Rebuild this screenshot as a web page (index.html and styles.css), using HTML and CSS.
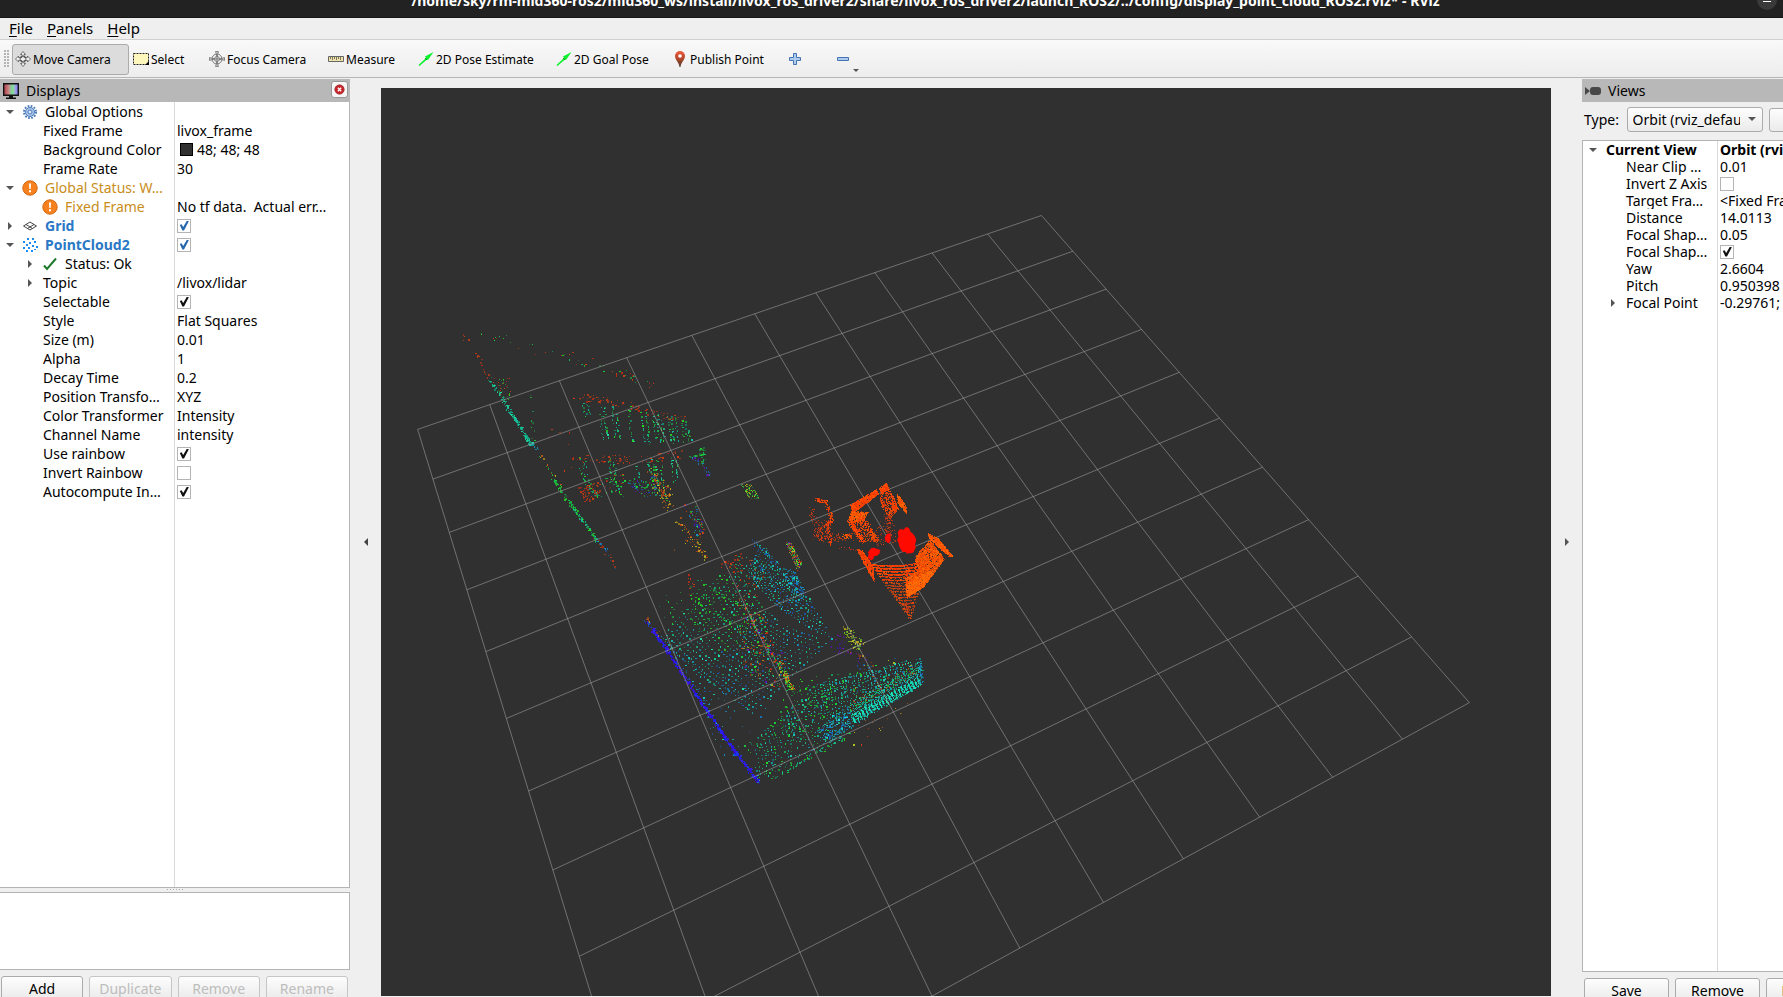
FILE: index.html
```
<!DOCTYPE html>
<html lang="en">
<head>
<meta charset="utf-8">
<title>display_point_cloud_ROS2.rviz* - RViz</title>
<link rel="stylesheet" href="styles.css">
</head>
<body>
<header class="titlebar">
  <span class="titlebar-text">/home/sky/rm-mid360-ros2/mid360_ws/install/livox_ros_driver2/share/livox_ros_driver2/launch_ROS2/../config/display_point_cloud_ROS2.rviz* - RViz</span>
  <button class="minimize" aria-label="Minimize"></button>
</header>
<nav class="menubar">
  <button class="menu"><u>F</u>ile</button>
  <button class="menu"><u>P</u>anels</button>
  <button class="menu"><u>H</u>elp</button>
</nav>
<div class="toolbar">
  <span class="grip"></span>
  <button class="tool tool-move active"><svg class="icon" viewBox="0 0 16 16"><path d="M8 .5l2.500 3H9v3h3.500V5L15.500 8l-3 3V9.500H9v3h1.500L8 15.500l-2.500-3H7v-3H3.500V11L.5 8l3-3v1.500H7v-3H5.500z" fill="#eee" stroke="#555" stroke-width=".8"/><circle cx="8" cy="8" r="3" fill="none" stroke="#555"/></svg>Move Camera</button>
  <button class="tool tool-select"><svg class="icon" viewBox="0 0 16 16"><path d="M.5 2.500h15v11H.5z" fill="#fdf6bd" stroke="#222" stroke-dasharray="2 1"/><path d="M16 10v4h-4z"/></svg>Select</button>
  <button class="tool tool-focus"><svg class="icon" viewBox="0 0 16 16"><g fill="none" stroke="#777"><circle cx="8" cy="8" r="5"/><circle cx="8" cy="8" r="2.500"/><path d="M8 3v10M3 8h10"/></g><path d="M8 5L6.500.5h3zM8 11l-1.500 4.500h3zM5 8L.5 6.500v3zM11 8l4.500-1.500v3z" fill="#ccc" stroke="#666" stroke-width=".7"/></svg>Focus Camera</button>
  <button class="tool tool-measure"><svg class="icon" viewBox="0 0 16 16"><path d="M.5 5.500h15v5H.5z" fill="#f1e3aa" stroke="#666"/><path d="M2.500 6v2M4.500 6v3M6.500 6v2M8.500 6v3M10.500 6v2M12.500 6v3" stroke="#776"/></svg>Measure</button>
  <button class="tool tool-pose"><svg class="icon" viewBox="0 0 16 16"><path d="M.5 14L8 7l-1-1.500L15.500 1 10 9 9 8.500 1.500 15z" fill="#0bf22c"/><path d="M7 7l2 2" stroke="#168c22"/></svg>2D Pose Estimate</button>
  <button class="tool tool-goal"><svg class="icon" viewBox="0 0 16 16"><path d="M.5 14L8 7l-1-1.500L15.500 1 10 9 9 8.500 1.500 15z" fill="#0bf22c"/><path d="M7 7l2 2" stroke="#168c22"/></svg>2D Goal Pose</button>
  <button class="tool tool-publish"><svg class="icon" viewBox="0 0 16 16"><defs><linearGradient id="pin" x2="0" y2="1"><stop stop-color="#f0593b"/><stop offset=".45" stop-color="#b94a2c"/><stop offset="1" stop-color="#4a3824"/></linearGradient></defs><path d="M8 0a5 5 0 0 1 5 5c0 4-4 6-4.500 11h-1C7 11 3 9 3 5a5 5 0 0 1 5-5z" fill="url(#pin)"/><circle cx="8" cy="5" r="1.800" fill="#fff"/></svg>Publish Point</button>
  <button class="tool tool-plus" aria-label="Add tool"><svg class="icon" viewBox="0 0 16 16"><path d="M6.500 2.500h3v4h4v3h-4v4h-3v-4h-4v-3h4z" fill="#aecbee" stroke="#4474b5"/></svg></button>
  <button class="tool tool-minus" aria-label="Remove tool"><svg class="icon" viewBox="0 0 16 16"><path d="M2.500 6.500h11v3h-11z" fill="#aecbee" stroke="#4474b5"/></svg><i class="tri drop"></i></button>
</div>
<main class="workspace">
  <section class="dock displays">
    <div class="dock-head">
      <svg class="icon" viewBox="0 0 16 16"><defs><linearGradient id="rgb"><stop offset=".1" stop-color="#b54f58"/><stop offset=".35" stop-color="#c88"/><stop offset=".5" stop-color="#8c9"/><stop offset=".65" stop-color="#8d9"/><stop offset=".8" stop-color="#a0a0e8"/><stop offset="1" stop-color="#77e"/></linearGradient></defs><path d="M.7.700h14.600v11.600H.7z" fill="url(#rgb)" stroke="#111" stroke-width="1.400"/><path d="M6 13h4v1.500h3V16H3v-1.500h3z" fill="#111"/></svg>
      <span class="dock-title">Displays</span>
      <button class="close" aria-label="Close Displays"><svg viewBox="0 0 12 12"><circle cx="6" cy="6" r="5" fill="#c9242c" stroke="#a01c22"/><path d="M4.200 4.200l3.600 3.600M7.800 4.200L4.200 7.800" stroke="#fff" stroke-width="1.500"/></svg></button>
    </div>
    <div class="tree tree-left">
      <table>
        <colgroup><col class="name-col"><col></colgroup>
        <tr><th class="l1"><div><i class="tri open"></i><svg class="icon" viewBox="0 0 16 16"><circle cx="8" cy="8" r="6" fill="none" stroke="#4b7bb8" stroke-width="2" stroke-dasharray="1.700 1.440"/><circle cx="8" cy="8" r="4.500" fill="#a9c6ea" stroke="#4b7bb8"/><circle cx="8" cy="8" r="2" fill="#dce9f8" stroke="#4b7bb8"/></svg>Global Options</div></th><td></td></tr>
        <tr><th class="prop">Fixed Frame</th><td>livox_frame</td></tr>
        <tr><th class="prop">Background Color</th><td><span class="swatch"></span>48; 48; 48</td></tr>
        <tr><th class="prop">Frame Rate</th><td>30</td></tr>
        <tr class="warn"><th class="l1"><div><i class="tri open"></i><svg class="icon" viewBox="0 0 16 16"><circle cx="8" cy="8" r="7.200" fill="#f5821f" stroke="#d4660e"/><path d="M7 3.500h2L8.700 9H7.300zM7 10.300h2v2H7z" fill="#fff"/></svg>Global Status: W…</div></th><td></td></tr>
        <tr class="warn"><th class="l2"><div><i class="tri none"></i><svg class="icon" viewBox="0 0 16 16"><circle cx="8" cy="8" r="7.200" fill="#f5821f" stroke="#d4660e"/><path d="M7 3.500h2L8.700 9H7.300zM7 10.300h2v2H7z" fill="#fff"/></svg>Fixed Frame</div></th><td class="plain">No tf data.&nbsp; Actual err…</td></tr>
        <tr class="disp"><th class="l1"><div><i class="tri shut"></i><svg class="icon" viewBox="0 0 16 16"><path d="M1.500 8L8 4l6.500 4L8 12zM4 6.500l6.500 4M12 6.500l-6.500 4" fill="none" stroke="#444"/></svg><label for="c-grid">Grid</label></div></th><td><input type="checkbox" class="check blue" id="c-grid" checked></td></tr>
        <tr class="disp"><th class="l1"><div><i class="tri open"></i><svg class="icon" viewBox="0 0 16 16"><path d="M5 1h2v2H5zM10 1h2v2h-2zM1 4h2v2H1zM7 5h2v2H7zM12 4h2v2h-2zM4 7h2v2H4zM10 8h2v2h-2zM1 10h2v2H1zM6 10h2v2H6zM14 9h2v2h-2zM4 13h2v2H4zM9 13h2v2H9zM12 12h2v1h-2z" fill="#1b8cf0"/></svg><label for="c-pc">PointCloud2</label></div></th><td><input type="checkbox" class="check blue" id="c-pc" checked></td></tr>
        <tr><th class="l2"><div><i class="tri shut"></i><svg class="icon" viewBox="0 0 16 16"><path d="M2 9.500l3 3.500L14 2.500" fill="none" stroke="#1e7a2a" stroke-width="2"/></svg>Status: Ok</div></th><td></td></tr>
        <tr><th class="sub"><div><i class="tri shut"></i>Topic</div></th><td>/livox/lidar</td></tr>
        <tr><th class="prop"><label for="c-sel">Selectable</label></th><td><input type="checkbox" class="check" id="c-sel" checked></td></tr>
        <tr><th class="prop">Style</th><td>Flat Squares</td></tr>
        <tr><th class="prop">Size (m)</th><td>0.01</td></tr>
        <tr><th class="prop">Alpha</th><td>1</td></tr>
        <tr><th class="prop">Decay Time</th><td>0.2</td></tr>
        <tr><th class="prop">Position Transfo…</th><td>XYZ</td></tr>
        <tr><th class="prop">Color Transformer</th><td>Intensity</td></tr>
        <tr><th class="prop">Channel Name</th><td>intensity</td></tr>
        <tr><th class="prop"><label for="c-use">Use rainbow</label></th><td><input type="checkbox" class="check" id="c-use" checked></td></tr>
        <tr><th class="prop"><label for="c-inv">Invert Rainbow</label></th><td><input type="checkbox" class="check" id="c-inv"></td></tr>
        <tr><th class="prop"><label for="c-auto">Autocompute In…</label></th><td><input type="checkbox" class="check" id="c-auto" checked></td></tr>
      </table>
    </div>
    <div class="splitter"></div>
    <div class="help"></div>
    <div class="buttons">
      <button class="btn">Add</button>
      <button class="btn" disabled>Duplicate</button>
      <button class="btn" disabled>Remove</button>
      <button class="btn" disabled>Rename</button>
    </div>
  </section>
  <button class="collapse" aria-label="Collapse left panel"><i class="tri left"></i></button>
  <div class="view"><canvas class="scene" role="img" aria-label="Point cloud over a ten by ten grid"></canvas></div>
  <button class="collapse" aria-label="Collapse right panel"><i class="tri shut"></i></button>
  <section class="dock views">
    <div class="views-inner">
      <div class="dock-head">
        <svg class="icon" viewBox="0 0 16 16"><rect x="5" y="4" width="11" height="8" rx="3" fill="#484848"/><path d="M0 4l5 4-5 4z" fill="#484848"/></svg>
        <span class="dock-title">Views</span>
      </div>
      <div class="type-row">
        <label for="type">Type:</label>
        <span class="combo"><select id="type"><option>Orbit (rviz_default_plugins)</option></select><i class="tri open"></i></span>
        <button class="btn zero">Zero</button>
      </div>
      <div class="tree tree-right">
        <table>
          <colgroup><col class="name-col"><col></colgroup>
          <tr class="bold"><th class="top"><div><i class="tri open"></i>Current View</div></th><td>Orbit (rviz)</td></tr>
          <tr><th class="prop">Near Clip …</th><td>0.01</td></tr>
          <tr><th class="prop"><label for="c-z">Invert Z Axis</label></th><td><input type="checkbox" class="check" id="c-z"></td></tr>
          <tr><th class="prop">Target Fra…</th><td>&lt;Fixed Frame&gt;</td></tr>
          <tr><th class="prop">Distance</th><td>14.0113</td></tr>
          <tr><th class="prop">Focal Shap…</th><td>0.05</td></tr>
          <tr><th class="prop"><label for="c-f">Focal Shap…</label></th><td><input type="checkbox" class="check" id="c-f" checked></td></tr>
          <tr><th class="prop">Yaw</th><td>2.6604</td></tr>
          <tr><th class="prop">Pitch</th><td>0.950398</td></tr>
          <tr><th class="sub"><div><i class="tri shut"></i>Focal Point</div></th><td>-0.29761; 0</td></tr>
        </table>
      </div>
      <div class="buttons">
        <button class="btn">Save</button>
        <button class="btn">Remove</button>
        <button class="btn">Rename</button>
      </div>
    </div>
  </section>
</main>
<script src="scene.js"></script>
</body>
</html>
```
FILE: styles.css
```
* { box-sizing: border-box; }
body {
  margin: 0;
  height: 100vh;
  overflow: hidden;
  display: flex;
  flex-direction: column;
  background: #efefef;
  color: #000;
  font: 14px/19px "Noto Sans", "Open Sans", sans-serif;
}
button, select, input { font: inherit; color: inherit; margin: 0; }
button { border: 0; background: none; padding: 0; }
svg { display: block; flex: none; }
.icon { width: 16px; height: 16px; }

.titlebar {
  flex: none;
  height: 18px;
  padding: 0 6px 6px 74px;
  display: flex;
  justify-content: center;
  align-items: flex-end;
  position: relative;
  overflow: hidden;
  background: #222;
  border-bottom: 1px solid #161616;
  color: #fff;
}
.titlebar-text { font: bold 14px/20px "Noto Sans", "Open Sans", sans-serif; white-space: nowrap; }
.minimize {
  position: absolute;
  right: 6px;
  top: -10px;
  width: 20px;
  height: 20px;
  border-radius: 50%;
  background: #3a3a3a;
}
.minimize::before { content: ""; display: block; width: 8px; height: 1px; margin: 2px auto 0; background: #fff; }

.menubar { flex: none; height: 22px; padding-left: 9px; display: flex; gap: 14px; align-items: center; border-bottom: 1px solid #d0d0d0; font-size: 15px; }
.menu u { text-underline-offset: 2px; text-decoration-thickness: 1px; }

.toolbar {
  flex: none;
  height: 38px;
  padding-top: 1px;
  display: flex;
  align-items: center;
  background: linear-gradient(#f9f9f9, #ededed);
  border-bottom: 1px solid #b6b6b6;
  font-size: 12px;
}
.grip { width: 5px; height: 18px; margin: 0 3px 0 4px; background: radial-gradient(circle at 1px 1px, #b5b5b5 1px, transparent 1px) 0 0 / 3px 3px; }
.tool { position: relative; height: 31px; display: flex; align-items: center; gap: 2px; padding-left: 2px; white-space: nowrap; border: 1px solid transparent; border-radius: 3px; }
.tool.active { background: #dcdcdc; border-color: #ababab; }
.tool-move { width: 117px; }
.tool-select { width: 77px; padding-left: 3px; }
.tool-focus { width: 119px; }
.tool-measure { width: 90px; }
.tool-pose { width: 138px; }
.tool-goal { width: 116px; }
.tool-publish { width: 115px; }
.tool-plus { width: 48px; }
.tool-minus { width: 30px; }

.tri { display: block; flex: none; width: 0; height: 0; border: 4px solid transparent; }
.tri.open, .tri.drop { border-top-color: #555; border-bottom: 0; }
.tri.shut { border-left-color: #555; border-right: 0; }
.tri.left { border-right-color: #444; border-left: 0; }
.tri.drop { position: absolute; right: 2px; bottom: 2px; border-width: 3px 3px 0; }

.workspace { flex: 1; min-height: 0; display: flex; padding-top: 1px; }
.dock { flex: none; display: flex; flex-direction: column; overflow: hidden; }
.displays { width: 350px; }
.views { width: 201px; }
.views-inner { width: 272px; flex: 1; min-height: 0; display: flex; flex-direction: column; }
.dock-head { flex: none; height: 23px; display: flex; align-items: center; gap: 7px; padding: 0 2px 0 3px; background: #b8b8b8; }
.dock-title { flex: 1; }
.close { width: 17px; height: 17px; margin-bottom: 2px; display: grid; place-items: center; background: #f6f6f6; border: 1px solid #999; border-radius: 3px; }
.close svg { width: 11px; height: 11px; }

.tree { flex: 1; min-height: 0; background: #fff; border: 1px solid #b4b4b4; }
.tree-left { border-left: 0; border-top: 0; background: linear-gradient(#dadada, #dadada) 174px 0 / 1px 100% no-repeat #fff; }
.tree-right { background: linear-gradient(#dadada, #dadada) 134px 0 / 1px 100% no-repeat #fff; }
table { width: 100%; table-layout: fixed; border-collapse: collapse; }
th, td { padding: 0; height: 19px; text-align: left; font-weight: normal; white-space: nowrap; overflow: hidden; vertical-align: middle; }
.tree-left .name-col { width: 174px; }
.tree-right .name-col { width: 134px; }
td { padding-left: 3px; }
.tree-right th, .tree-right td { height: 17px; line-height: 17px; }
th div { display: flex; align-items: center; }
.l1 div { padding-left: 6px; }
.l1 .icon, .l2 .icon { margin-right: 7px; }
.l1 .tri, .l2 .tri { margin-right: 8px; }
.l2 div { padding-left: 26px; }
.l1 .shut, .l2 .shut { margin-left: 2px; margin-right: 10px; }
.sub div { padding-left: 28px; }
.sub .tri { margin-right: 11px; }
.prop { padding-left: 43px; }
.top div { padding-left: 6px; }
.top .tri { margin-right: 9px; }
.tri.none { border-color: transparent; }
.warn { color: #c98d1a; }
.warn .plain { color: #000; }
.disp th { font-weight: bold; color: #2a78c6; }
.bold th, .bold td { font-weight: bold; }
.swatch { display: inline-block; width: 13px; height: 13px; margin: 0 4px 0 3px; vertical-align: -1px; background: #303030; border: 1px solid #000; }
.check { appearance: none; display: block; width: 14px; height: 14px; border: 1px solid #b4b4b4; background: #fff; }
.check:checked::before { content: ""; display: block; width: 10px; height: 10px; margin: 1px; background: #111; clip-path: polygon(8% 45%, 26% 38%, 42% 66%, 80% 0, 98% 8%, 50% 100%, 34% 100%); }
.check.blue:checked::before { background: #2467ad; }

.splitter { flex: none; height: 4px; padding-top: 1px; }
.splitter::before { content: ""; display: block; width: 17px; height: 1px; margin: 0 auto; background: repeating-linear-gradient(90deg, #aaa 0 1px, transparent 1px 3px); }
.help { flex: none; height: 78px; background: #fff; border: 1px solid #b4b4b4; border-left: 0; }
.buttons { flex: none; height: 27px; padding: 6px 2px 0 1px; display: flex; gap: 6px; }
.btn { flex: 1; height: 24px; border: 1px solid #ababab; border-radius: 3px; background: linear-gradient(#fdfdfd, #ebebeb); text-align: center; }
.btn:disabled { color: #bdbdbd; border-color: #c6c6c6; }
.views .buttons { height: 25px; padding-left: 2px; }
.views .btn { flex: 0 0 85px; }

.collapse { flex: none; width: 31px; padding-top: 8px; display: grid; place-items: center; }
.view { flex: 1; min-width: 0; margin: 9px 0 1px; background: #303030; overflow: hidden; }
.scene { display: block; width: 100%; height: 100%; }

.type-row { flex: none; height: 38px; padding: 0 0 3px 2px; display: flex; align-items: center; gap: 6px; }
.type-row label { width: 37px; }
.combo { position: relative; width: 138px; height: 25px; }
.combo select { appearance: none; width: 100%; height: 100%; padding: 0 22px 0 5px; border: 1px solid #ababab; border-radius: 3px; background: linear-gradient(#fdfdfd, #ebebeb); overflow: hidden; }
.combo .tri { position: absolute; right: 7px; top: 10px; }
```
FILE: scene.js
```
const canvas = document.querySelector('.scene');
const W0 = 1170, H0 = 908;
let ctx, seed;

function rnd() {
  seed = (seed + 0x6D2B79F5) | 0;
  let t = Math.imul(seed ^ (seed >>> 15), 1 | seed);
  t = (t + Math.imul(t ^ (t >>> 7), 61 | t)) ^ t;
  return ((t ^ (t >>> 14)) >>> 0) / 4294967296;
}
const mix = (a, b, t) => a + (b - a) * t;
const pick = a => a[Math.floor(rnd() * a.length)];

const GREEN = ['#16d23c', '#1f9a3a', '#12b85a', '#22e022', '#237a3c'];
const TEAL = ['#10c888', '#12a080', '#1fe0a0', '#168a70', '#14c0a8'];
const CYAN = ['#12c4c0', '#10a4b4', '#1890b0', '#18e0d0', '#1a7c90'];
const BLUE = ['#1478c0', '#1a5ab8', '#1890d0', '#205090'];
const WALL = ['#2a12f0', '#4010f0', '#1a20ff', '#3808c8', '#2038e8'];
const RED = ['#b82c14', '#c84014', '#8c3420', '#e03c10'];
const WARM = ['#c85a14', '#c89a18', '#b0c01c', '#d03c14', '#8a4a1c'];
const YELLOW = ['#c8d81c', '#98b020', '#c8a018', '#60c020'];
const PURPLE = ['#5a14b0', '#7018a0', '#3c1a98'];
const FIRE = ['#ff3c00', '#ff4a00', '#f83400', '#e84408', '#ff5a08'];
const ORANGE = ['#ff5c00', '#ff6c08', '#f85000', '#ff4800'];

function dot(x, y, pal, size) {
  ctx.fillStyle = pick(pal);
  ctx.globalAlpha = 0.6 + rnd() * 0.4;
  const w = size || (rnd() < 0.4 ? 2 : 1), h = size || (rnd() < 0.35 ? 2 : 1);
  ctx.fillRect(Math.round(x), Math.round(y), w, h);
}
function path(pts, n, jitter, pal, size) {
  for (let i = 0; i < n; i++) {
    const t = rnd() * (pts.length - 1), k = Math.floor(t), f = t - k;
    dot(mix(pts[k][0], pts[k + 1][0], f) + (rnd() - 0.5) * jitter,
        mix(pts[k][1], pts[k + 1][1], f) + (rnd() - 0.5) * jitter, pal, size);
  }
}
function curve(a, c, b, step, pal, gap, jitter) {
  const len = Math.hypot(b[0] - a[0], b[1] - a[1]), n = Math.ceil(len / step);
  for (let i = 0; i <= n; i++) {
    if (rnd() < gap) continue;
    const t = i / n, u = 1 - t;
    dot(u * u * a[0] + 2 * u * t * c[0] + t * t * b[0] + (rnd() - 0.5) * jitter,
        u * u * a[1] + 2 * u * t * c[1] + t * t * b[1] + (rnd() - 0.5) * jitter, pal);
  }
}
function inside(p, x, y) {
  let r = false;
  for (let i = 0, j = p.length - 1; i < p.length; j = i++) {
    if ((p[i][1] > y) !== (p[j][1] > y) &&
        x < (p[j][0] - p[i][0]) * (y - p[i][1]) / (p[j][1] - p[i][1]) + p[i][0]) r = !r;
  }
  return r;
}
function area(poly, density, pal, size) {
  const xs = poly.map(p => p[0]), ys = poly.map(p => p[1]);
  const x0 = Math.min(...xs), x1 = Math.max(...xs), y0 = Math.min(...ys), y1 = Math.max(...ys);
  const n = (x1 - x0) * (y1 - y0) * density;
  for (let i = 0; i < n; i++) {
    const x = mix(x0, x1, rnd()), y = mix(y0, y1, rnd());
    if (inside(poly, x, y)) dot(x, y, pal, size);
  }
}
function blob(cx, cy, rx, ry) {
  ctx.globalAlpha = 1;
  ctx.fillStyle = '#ff0a00';
  ctx.beginPath();
  for (let i = 0; i < 20; i++) {
    const a = i * Math.PI / 10, k = 0.85 + rnd() * 0.3;
    ctx.lineTo(cx + Math.cos(a) * rx * k, cy + Math.sin(a) * ry * k);
  }
  ctx.fill();
}

function farWall() {
  path([[461, 334], [480, 358], [490, 382]], 16, 4, RED);
  path([[489, 379], [505, 402]], 34, 3, TEAL);
  path([[503, 401], [520, 427], [531, 444]], 130, 3, TEAL);
  path([[530, 442], [538, 450]], 12, 3, CYAN);
  path([[540, 455], [562, 488]], 24, 3, WARM.concat(GREEN));
  path([[552, 478], [566, 498], [577, 512]], 60, 3, GREEN);
  path([[571, 506], [583, 521], [597, 540]], 75, 3, TEAL.concat(GREEN));
  path([[594, 538], [605, 550], [616, 569]], 26, 4, BLUE.concat(RED));
  path([[467, 323], [490, 336], [530, 348], [566, 357]], 18, 10, GREEN.concat(RED), 1);
  path([[566, 353], [590, 364], [625, 374], [650, 384]], 34, 11, GREEN.concat(RED));
  area([[490, 376], [511, 376], [512, 400], [502, 402]], 0.1, GREEN.concat(RED), 1);
  path([[530, 396], [533, 440]], 10, 3, GREEN);
  path([[540, 436], [560, 430], [568, 470]], 8, 20, RED);
}

function shelves() {
  [[583, 402, 415], [587, 403, 413], [600, 408, 439], [604, 405, 438], [612, 407, 436], [616, 414, 438],
   [629, 407, 442], [641, 412, 440], [646, 411, 444], [653, 414, 438], [657, 413, 444], [661, 416, 440],
   [668, 416, 440], [671, 416, 442], [675, 416, 441], [681, 420, 440], [685, 420, 440], [688, 428, 438]
  ].forEach(c => curve([c[0], c[1]], [c[0], mix(c[1], c[2], .5)], [c[0] + 3, c[2]], 1.8, GREEN.concat(TEAL), .25, 2));
  path([[575, 396], [612, 401], [650, 411], [686, 420]], 75, 8, RED);
  [[580, 458, 596, 496], [584, 460, 602, 498], [609, 457, 616, 490], [614, 462, 622, 496], [634, 462, 640, 480],
   [648, 462, 652, 478], [652, 460, 656, 486], [656, 460, 660, 494], [661, 460, 666, 500], [671, 458, 674, 480], [676, 460, 676, 480]
  ].forEach(c => curve([c[0], c[1]], [c[0], c[3] - 15], [c[2], c[3]], 1.6, GREEN.concat(TEAL), .25, 3));
  path([[573, 458], [610, 459], [650, 458], [685, 453]], 70, 8, RED);
  area([[578, 487], [600, 480], [600, 496], [584, 502]], 0.22, RED);
  area([[600, 476], [626, 472], [626, 496], [604, 494]], 0.06, GREEN.concat(RED));
  area([[626, 480], [658, 472], [656, 496], [638, 496]], 0.16, BLUE.concat(PURPLE, GREEN));
  path([[650, 470], [662, 488], [668, 506]], 85, 13, WARM);
  path([[690, 456], [704, 455]], 16, 3, GREEN);
  path([[701, 447], [703, 463]], 26, 5, GREEN);
  path([[693, 456], [704, 466], [710, 478]], 24, 4, PURPLE.concat(BLUE));
  path([[675, 516], [692, 538], [708, 560]], 55, 6, WARM);
  path([[688, 505], [698, 520], [699, 536]], 75, 9, BLUE.concat(GREEN, PURPLE, RED));
  path([[676, 545], [700, 548]], 10, 14, WARM);
  area([[741, 484], [751, 484], [759, 498], [747, 498]], 0.55, YELLOW.concat(GREEN), 1);
  area([[785, 541], [790, 542], [802, 563], [797, 571]], 1.5, YELLOW.concat(GREEN, RED, PURPLE), 1);
}

function floor() {
  for (let k = 0; k < 22; k++) {
    const t = k / 21;
    const a = [mix(661, 738, t), mix(636, 556, t)];
    const b = [mix(752, 829, t), mix(712, 640, t)];
    const c = [mix(690, 748, t), mix(670, 624, t)];
    const mid = [(a[0] + 2 * c[0] + b[0]) / 4, (a[1] + 2 * c[1] + b[1]) / 4];
    const c1 = [(a[0] + c[0]) / 2, (a[1] + c[1]) / 2], c2 = [(b[0] + c[0]) / 2, (b[1] + c[1]) / 2];
    curve(a, c1, mid, 4, t < .3 ? CYAN.concat(TEAL) : TEAL.concat(GREEN), .2, .8);
    curve(mid, c2, b, 4, CYAN.concat(TEAL, BLUE), .12, .8);
  }
  for (let k = 0; k < 13; k++) {
    const t = k / 12;
    curve([mix(748, 760, t), mix(570, 545, t)], [mix(768, 785, t), mix(608, 572, t)],
          [mix(831, 797, t), mix(638, 577, t)], 3, CYAN.concat(TEAL, BLUE), .12, .8);
  }
  for (let k = 0; k < 9; k++) {
    const t = k / 8;
    curve([mix(664, 708, t), mix(640, 705, t)], [700, mix(668, 715, t)],
          [mix(770, 728, t), mix(700, 762, t)], 6, BLUE.concat(CYAN), .3, 2);
  }
  curve([697, 579], [722, 595], [748, 610], 1.8, GREEN, .05, 2);
  curve([690, 596], [712, 616], [742, 625], 2, GREEN, .05, 2);
  area([[655, 600], [692, 580], [742, 612], [700, 645], [670, 630]], .02, GREEN);
  area([[742, 553], [765, 570], [748, 622], [728, 592]], .06, TEAL.concat(RED));
  path([[724, 565], [740, 556], [733, 572]], 24, 8, RED);
  path([[690, 577], [692, 594]], 12, 6, RED);
  area([[778, 572], [792, 568], [806, 594], [798, 600]], .2, CYAN.concat(BLUE));
  path([[752, 540], [766, 552], [774, 562]], 38, 5, PURPLE.concat(TEAL, BLUE));
  path([[645, 618], [654, 633]], 26, 3, WALL.concat(BLUE));
  path([[652, 628], [668, 652], [693, 690]], 210, 3, WALL);
  path([[693, 690], [725, 738], [758, 782]], 350, 3, WALL);
  path([[644, 614], [658, 632]], 8, 8, WARM);
  area([[742, 612], [760, 612], [790, 668], [778, 690], [742, 670], [735, 640]], .075, PURPLE.concat(RED, WARM, GREEN));
  path([[750, 617], [762, 638], [778, 665]], 90, 3, GREEN.concat(RED, PURPLE));
  path([[777, 662], [786, 678], [793, 691]], 110, 5, GREEN.concat(WARM, YELLOW, ['#ff6010']));
  area([[842, 626], [850, 626], [866, 644], [856, 652], [846, 640]], .22, YELLOW);
  area([[828, 632], [842, 632], [850, 656], [830, 650]], .08, PURPLE);
  path([[850, 650], [868, 662]], 16, 12, PURPLE.concat(WARM));
}

function wing() {
  for (let k = 0; k < 56; k++) {
    const t = k / 55;
    const bx = mix(757, 921, t), by = mix(782, 684, t);
    const topX = mix(745, 918, Math.pow(t, .92));
    const topY = t < .38 ? mix(745, 684, t / .38) : mix(684, 657, (t - .38) / .62);
    const c = [mix(bx, topX, .3) + 4, mix(by, topY, .7)];
    curve([bx, by], c, [topX, topY], 3, t < .5 ? TEAL.concat(GREEN, CYAN) : TEAL.concat(CYAN), t < .4 ? .3 : .2, 1.4);
  }
  area([[848, 706], [918, 665], [921, 685], [853, 724]], .4, CYAN.concat(TEAL), 1);
  area([[848, 703], [915, 664], [918, 672], [850, 712]], .35, GREEN.concat(RED, TEAL), 1);
  for (let k = 0; k < 21; k++) {
    const x = mix(851, 917, k / 20), y = mix(714, 677, k / 20);
    path([[x, y], [x + 4, y + 8]], 24, 1.5, ['#14e8c8', '#10d0c0', '#18f0b0'], 1);
  }
  path([[919, 662], [921, 684]], 35, 3, BLUE.concat(CYAN));
  area([[815, 728], [848, 705], [853, 726], [826, 744]], .2, BLUE.concat(CYAN));
  area([[775, 700], [800, 678], [850, 670], [846, 703], [785, 745]], .03, GREEN);
  area([[855, 664], [910, 656], [918, 664], [852, 700]], .04, WARM.concat(BLUE, GREEN));
  path([[770, 778], [810, 755], [850, 733]], 80, 5, TEAL.concat(GREEN));
  path([[853, 728], [880, 724], [905, 705]], 12, 12, WARM, 1);
  [[853, 744], [861, 744], [867, 736], [879, 728], [900, 713]].forEach(p => dot(p[0], p[1], WARM));
}

function nearCloud() {
  const z = list => list.map(p => [780 + p[0] / 3, 470 + p[1] / 3]);
  area(z([[210, 103], [288, 57], [295, 72], [215, 130]]), 4, FIRE, 1);
  area(z([[296, 54], [318, 38], [328, 58], [302, 68]]), 4, FIRE, 1);
  area(z([[318, 50], [345, 88], [354, 116], [340, 130], [336, 85]]), 2.4, FIRE, 1);
  area(z([[298, 68], [330, 62], [350, 110], [330, 150], [300, 100]]), 1, FIRE, 1);
  area(z([[350, 70], [376, 102], [378, 132], [352, 98]]), 3, ORANGE, 1);
  area(z([[203, 145], [215, 122], [264, 125], [250, 150], [215, 160]]), 2.6, ORANGE, 1);
  path(z([[205, 150], [245, 212]]), 190, 4, FIRE, 1);
  path(z([[240, 135], [290, 210]]), 120, 5, FIRE, 1);
  area(z([[212, 155], [254, 145], [300, 214], [240, 214]]), .65, FIRE, 1);
  path(z([[320, 130], [325, 195]]), 60, 6, RED, 1);
  area(z([[285, 165], [340, 120], [350, 215], [290, 230]]), .16, RED, 1);
  path(z([[108, 88], [138, 96], [155, 148], [138, 165], [152, 224]]), 240, 4, FIRE, 1);
  path(z([[92, 120], [110, 170], [105, 200], [140, 205]]), 110, 6, RED, 1);
  area(z([[115, 150], [155, 150], [152, 200], [118, 200]]), .4, RED, 1);
  path(z([[150, 200], [215, 200]]), 60, 8, RED, 1);
  path(z([[192, 198], [210, 198]]), 44, 5, ORANGE, 1);
  path(z([[175, 232], [235, 238]]), 12, 2, RED, 1);
  blob(906, 540, 9, 12);
  blob(909, 545, 7, 8);
  blob(888, 538, 3, 5);
  blob(874, 552, 6, 4);
  blob(871, 556, 3, 4);
  area(z([[230, 236], [245, 240], [278, 285], [282, 335], [265, 305], [248, 275]]), 3.5, FIRE, 1);
  for (let k = 0; k < 19; k++) {
    const t = k / 18;
    const a = z([[mix(272, 384, t), mix(282, 440, t)]])[0], b = z([[mix(436, 391, t), mix(274, 444, t)]])[0];
    curve(a, [(a[0] + b[0]) / 2, (a[1] + b[1]) / 2 + 5 * (1 - t)], b, t < .2 ? .45 : .9, t < .3 ? FIRE : ['#d04410', '#e84c08', '#b84018'], t < .2 ? 0 : .1, .6);
  }
  area(z([[402, 262], [448, 208], [492, 266], [430, 350], [380, 382], [374, 325], [415, 300]]), 3, ORANGE.concat(['#d84408']), 1);
  area(z([[410, 320], [465, 295], [430, 348], [380, 382], [376, 345]]), 1.4, ['#ff6a08'], 1);
  area(z([[442, 188], [472, 202], [520, 260], [505, 258], [448, 208]]), 3.4, ORANGE, 1);
  area(z([[370, 380], [382, 390], [390, 445], [376, 410]]), .5, RED, 1);
}

/* Perspective mapping of ground cell (i, j) to the scene. */
function ground(i, j) {
  const w = 1 + 0.01759 * i - 0.03382 * j;
  const X = (50 + 98.36 * i + 17.9 * j) / w, Y = (478 - 39.8 * i + 75.92 * j) / w;
  return [380 + X / 1.3288, 180 + Y / 1.9168];
}
function grid() {
  ctx.globalAlpha = 1;
  ctx.strokeStyle = 'rgba(160,160,164,.58)';
  ctx.lineWidth = 1;
  ctx.beginPath();
  for (let k = 0; k <= 10; k++) {
    ctx.moveTo(...ground(k, 0));
    ctx.lineTo(...ground(k, 10));
    ctx.moveTo(...ground(0, k));
    ctx.lineTo(...ground(10, k));
  }
  ctx.stroke();
}

function draw() {
  canvas.width = canvas.clientWidth;
  canvas.height = canvas.clientHeight;
  ctx = canvas.getContext('2d');
  seed = 20360;
  ctx.translate(Math.round((canvas.width - W0) / 2) - 381, Math.round((canvas.height - H0) / 2) - 88);
  farWall();
  shelves();
  floor();
  wing();
  grid();
  nearCloud();
}
draw();
window.addEventListener('resize', draw);
```
